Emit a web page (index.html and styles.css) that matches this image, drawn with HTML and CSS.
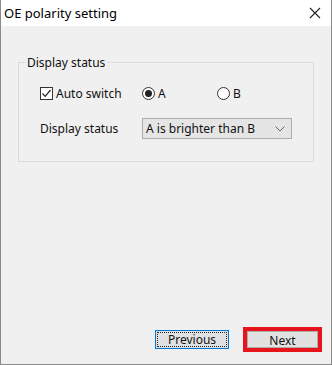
FILE: index.html
```html
<!DOCTYPE html>
<html>
<head>
  <meta charset="UTF-8">
  <title>OE polarity setting</title>
  <link rel="stylesheet" href="styles.css">
</head>
<body>
<div class="window">
  <div class="titlebar">
    <span class="title">OE polarity setting</span>
    <span class="close">
      <svg width="12" height="12" viewBox="0 0 12 12"><path d="M1 1 L11 11 M11 1 L1 11" stroke="#222" stroke-width="1.1" fill="none"/></svg>
    </span>
  </div>
  <div class="content">
    <fieldset class="group">
      <legend>Display status</legend>
      <div class="grid">
        <label class="check">
          <span class="box">
            <svg width="11" height="11" viewBox="0 0 11 11"><path d="M1.5 5.5 L4.2 8.3 L9.5 2" stroke="#222" stroke-width="1.2" fill="none"/></svg>
          </span>
          Auto switch
        </label>
        <label class="radio"><span class="dot on"></span>A</label>
        <label class="radio"><span class="dot"></span>B</label>
        <span class="label">Display status</span>
        <div class="select">
          <span>A is brighter than B</span>
          <svg width="10" height="6" viewBox="0 0 10 6"><path d="M0.5 0.5 L5 5 L9.5 0.5" stroke="#666" stroke-width="1" fill="none"/></svg>
        </div>
      </div>
    </fieldset>
    <div class="footer">
      <button class="btn focused"><span>Previous</span></button>
      <div class="marked">
        <button class="btn next">Next</button>
      </div>
    </div>
  </div>
</div>
</body>
</html>
```
FILE: styles.css
```css
body {
  margin: 0;
  font-family: "Noto Sans", "Liberation Sans", sans-serif;
  font-size: 12px;
  color: #111;
}
.window {
  width: 332px;
  height: 365px;
  box-sizing: border-box;
  border: 1px solid #8a8a8a;
  border-top: none;
  display: flex;
  flex-direction: column;
}
.titlebar {
  height: 26px;
  background: #fff;
  display: flex;
  align-items: center;
  justify-content: space-between;
  padding: 0 10px 0 3px;
}
.title {
  font-size: 13px;
  color: #000;
}
.close {
  display: flex;
}
.content {
  flex: 1;
  background: #f0f0f0;
  display: flex;
  flex-direction: column;
  padding-top: 28px;
}
.group {
  margin: 0 17px;
  border: 1px solid #dcdcdc;
  padding: 0;
}
.group legend {
  margin-left: 6px;
  padding: 0 2px;
}
.grid {
  display: grid;
  grid-template-columns: 102px 75px 75px;
  grid-template-rows: 13px 21px;
  row-gap: 18px;
  align-items: center;
  padding: 16px 0 22px 21px;
}
.check, .radio {
  display: flex;
  align-items: center;
  gap: 3px;
}
.box {
  width: 13px;
  height: 13px;
  box-sizing: border-box;
  border: 1px solid #333;
  background: #fff;
  display: flex;
  align-items: center;
  justify-content: center;
}
.dot {
  width: 13px;
  height: 13px;
  box-sizing: border-box;
  border: 1px solid #333;
  border-radius: 50%;
  background: #fff;
  display: flex;
  align-items: center;
  justify-content: center;
}
.dot.on::after {
  content: "";
  width: 7px;
  height: 7px;
  border-radius: 50%;
  background: #222;
}
.select {
  grid-column: 2 / 4;
  width: 150px;
  height: 21px;
  box-sizing: border-box;
  border: 1px solid #adadad;
  background: #e5e5e5;
  display: flex;
  align-items: center;
  justify-content: space-between;
  padding: 0 6px 0 3px;
}
.footer {
  margin-top: auto;
  display: flex;
  justify-content: flex-end;
  align-items: center;
  gap: 14px;
  padding: 0 9px 12px 0;
}
.btn {
  width: 74px;
  height: 19px;
  box-sizing: border-box;
  border: 1px solid #adadad;
  background: #e1e1e1;
  font-family: inherit;
  font-size: 12px;
  color: #111;
  padding: 0;
}
.btn.next {
  width: 71px;
  height: 17px;
}
.btn.focused {
  border: 1px solid #0078d7;
  padding: 1px;
}
.btn.focused span {
  display: block;
  height: 100%;
  box-sizing: border-box;
  border: 1px dotted #222;
  line-height: 13px;
}
.marked {
  border: 4px solid #e8141c;
  display: flex;
}
```
